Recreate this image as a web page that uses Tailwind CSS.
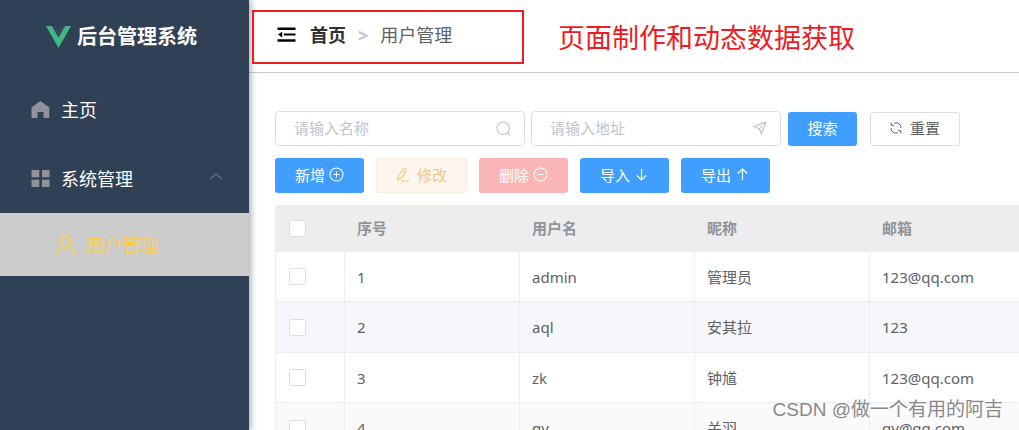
<!DOCTYPE html>
<html lang="zh-CN">
<head>
<meta charset="utf-8">
<meta name="viewport" content="width=device-width, initial-scale=1">
<title>后台管理系统</title>
<script src="https://cdn.jsdelivr.net/npm/@tailwindcss/browser@4"></script>
</head>
<body class="relative flex h-screen overflow-hidden bg-white font-['Noto_Sans','Noto_Sans_CJK_SC',sans-serif] text-[15px] leading-5 text-[#606266]">

<aside class="relative z-10 w-[249px] shrink-0 bg-[#304156] text-lg text-white shadow-[2px_0_6px_rgba(0,21,41,0.35)]">
  <div class="flex h-[74px] items-center justify-center gap-1.5 pr-1.5">
    <svg class="h-[22px] w-[25px]" viewBox="0 0 25 22" aria-hidden="true">
      <path d="M0 0H6L12.5 11.5L19 0H25L12.5 22Z" fill="#41b883"/>
      <path d="M6 0H10L12.5 4.4L15 0H19L12.5 11.5Z" fill="#34495e"/>
    </svg>
    <h1 class="text-xl font-bold">后台管理系统</h1>
  </div>
  <nav class="pt-px">
    <a href="#" class="flex h-[69px] items-center gap-[11px] pl-[31px]">
      <svg class="h-[19px] w-[19px] text-[#909399]" viewBox="0 0 19 19" fill="currentColor" aria-hidden="true"><path d="M9.5 1L18.3 7.6V18H12.5V12H6.5V18H.5V7.6Z"/></svg>
      主页
    </a>
    <a href="#" class="flex h-[69px] items-center gap-[11px] pl-[31px] pr-[26px]">
      <svg class="h-[19px] w-[19px] text-[#909399]" viewBox="0 0 19 19" fill="currentColor" aria-hidden="true"><path d="M.5 1H8.3V8.3H.5ZM11 1H18.5V8.3H11ZM.5 10.8H8.3V18H.5ZM11 10.8H18.5V18H11Z"/></svg>
      <span class="flex-1">系统管理</span>
      <svg class="mb-1.5 h-3 w-3.5 text-[#909399]" viewBox="0 0 14 12" fill="none" stroke="currentColor" aria-hidden="true"><path d="M1.5 9L7 3.5L12.5 9"/></svg>
    </a>
    <a href="#" aria-current="page" class="flex h-[63px] items-center gap-2.5 bg-[#ccc] pl-14 text-[#ffd04b]">
      <svg class="h-5 w-5" viewBox="0 0 20 20" fill="none" stroke="currentColor" stroke-width="1.6" stroke-linecap="round" aria-hidden="true"><circle cx="9.7" cy="6" r="5.3"/><path d="M1 19V17.5Q1 14.3 4.3 14.3H14.7Q18 14.3 18 17.5V19"/></svg>
      用户管理
    </a>
  </nav>
</aside>

<div class="min-w-0 flex-1">
  <header class="flex h-[73px] items-center border-b border-[#ccc] pb-[3px] pl-7 text-lg">
    <button type="button" aria-label="折叠菜单" class="text-black">
      <svg class="h-[18px] w-[19px]" viewBox="0 0 19 18" aria-hidden="true"><path d="M.5 1.5H18.5V4H.5ZM.5 13.2H18.5V15.7H.5ZM6.8 7.6H18.5V9.6H6.8ZM1 8.6L5.2 5.7V11.5Z"/></svg>
    </button>
    <nav aria-label="面包屑" class="ml-3.5 flex items-center">
      <a href="#" class="font-bold text-[#303133]">首页</a>
      <span class="mx-3 font-bold text-[#c0c4cc]">&gt;</span>
      <span>用户管理</span>
    </nav>
  </header>

  <main class="overflow-hidden pt-[38px] pl-[26px]">
    <form class="flex items-center">
      <label class="relative mr-1.5 block w-[250px]">
        <input type="text" aria-label="名称" placeholder="请输入名称" class="h-[35px] w-full rounded-sm border border-[#dcdfe6] bg-white pr-9 pb-0.5 pl-[18px] outline-none placeholder:text-[#c0c4cc]">
        <svg class="absolute top-2.5 right-3.5 h-[15px] w-[15px] text-[#c0c4cc]" viewBox="0 0 15 15" fill="none" stroke="currentColor" stroke-width="1.1" aria-hidden="true"><circle cx="7.2" cy="7.2" r="6.2"/><path d="M11.5 11.5L14 14"/></svg>
      </label>
      <label class="relative mr-[7px] block w-[250px]">
        <input type="text" aria-label="地址" placeholder="请输入地址" class="h-[35px] w-full rounded-sm border border-[#dcdfe6] bg-white pr-9 pb-0.5 pl-[18px] outline-none placeholder:text-[#c0c4cc]">
        <svg class="absolute top-2.5 right-3.5 h-[14px] w-[14px] text-[#c0c4cc]" viewBox="0 0 14 14" fill="none" stroke="currentColor" stroke-width="1.2" stroke-linejoin="round" aria-hidden="true"><path d="M13 1L1 5.5L6.2 7.8L8.5 13ZM6.2 7.8L9 5"/></svg>
      </label>
      <button type="button" class="mr-[13px] h-[34px] w-[69px] rounded-[3px] bg-[#409eff] pb-0.5 text-white">搜索</button>
      <button type="reset" class="flex h-[34px] w-[90px] items-center justify-center gap-2 rounded-[3px] border border-[#dcdfe6] bg-white pb-0.5">
        <svg class="h-3 w-3" viewBox="0 0 12 12" fill="none" stroke="currentColor" aria-hidden="true"><path d="M4 1.1Q8 -.2 10.2 3Q11 4.5 11 6M8 10.9Q4 12.2 1.8 9Q1 7.5 1 6M1.2 .5V3.3H4M10.8 11.5V8.7H8"/></svg>
        重置
      </button>
    </form>

    <div class="mt-3 flex gap-3 text-white">
      <button type="button" class="flex h-[35px] w-[89px] items-center justify-center gap-1 rounded-[3px] bg-[#409eff] pb-0.5">
        新增
        <svg class="h-[15px] w-[15px]" viewBox="0 0 15 15" fill="none" stroke="currentColor" stroke-width="1.1" aria-hidden="true"><circle cx="7.5" cy="7.5" r="6.5"/><path d="M4.5 7.5H10.5M7.5 4.5V10.5"/></svg>
      </button>
      <button type="button" disabled class="flex h-[35px] w-[91px] items-center justify-center gap-1.5 rounded-[3px] border border-[#faecd8] bg-[#fdf6ec] pb-0.5 text-[#f0c78a]">
        <svg class="h-[15px] w-[15px]" viewBox="0 0 15 15" fill="none" stroke="currentColor" stroke-width="1.1" stroke-linejoin="round" aria-hidden="true"><path d="M1.8 13.2L2.2 9L7.3 1.7Q8.3 .8 9.6 1.7Q11 2.7 10.4 3.9L5.4 11.1ZM6.4 3.1L9.5 5.2M5 14H13.5"/></svg>
        修改
      </button>
      <button type="button" disabled class="flex h-[35px] w-[89px] items-center justify-center gap-1 rounded-[3px] bg-[#fab6b6] pb-0.5">
        删除
        <svg class="h-[15px] w-[15px]" viewBox="0 0 15 15" fill="none" stroke="currentColor" stroke-width="1.1" aria-hidden="true"><circle cx="7.5" cy="7.5" r="6.5"/><path d="M4.5 7.5H10.5"/></svg>
      </button>
      <button type="button" class="flex h-[35px] w-[89px] items-center justify-center gap-1 rounded-[3px] bg-[#409eff] pb-0.5">
        导入
        <svg class="h-[15px] w-[15px]" viewBox="0 0 15 15" fill="none" stroke="currentColor" stroke-width="1.2" aria-hidden="true"><path d="M7.5 2V13M2.8 8.5L7.5 13L12.2 8.5"/></svg>
      </button>
      <button type="button" class="flex h-[35px] w-[89px] items-center justify-center gap-1 rounded-[3px] bg-[#409eff] pb-0.5">
        导出
        <svg class="h-[15px] w-[15px]" viewBox="0 0 15 15" fill="none" stroke="currentColor" stroke-width="1.2" aria-hidden="true"><path d="M7.5 13V2M2.8 6.5L7.5 2L12.2 6.5"/></svg>
      </button>
    </div>

    <table class="mt-3 w-[770px] table-fixed border-separate border-spacing-0 border-l border-[#ebeef5] text-left [&_td]:border-r [&_td]:border-b [&_td]:border-[#ebeef5] [&_td]:px-3 [&_td]:py-0 [&_th]:border-r [&_th]:border-b [&_th]:border-[#ebeef5] [&_th]:px-3 [&_th]:py-0 [&_input]:block [&_input]:size-[17px] [&_input]:appearance-none [&_input]:rounded-xs [&_input]:border [&_input]:border-[#dcdfe6] [&_input]:bg-white [&_input]:ml-px">
      <colgroup><col class="w-[69px]"><col class="w-[175px]"><col class="w-[175px]"><col class="w-[175px]"><col class="w-[175px]"></colgroup>
      <thead class="bg-[#ededed] text-[#909399]">
        <tr class="h-[47px]"><th scope="col"><input type="checkbox" aria-label="全选"></th><th scope="col">序号</th><th scope="col">用户名</th><th scope="col">昵称</th><th scope="col">邮箱</th></tr>
      </thead>
      <tbody>
        <tr class="h-[50px]"><td><input type="checkbox" aria-label="选择 admin"></td><td>1</td><td>admin</td><td>管理员</td><td>123@qq.com</td></tr>
        <tr class="h-[51px] bg-[#f5f7fa]"><td><input type="checkbox" aria-label="选择 aql"></td><td>2</td><td>aql</td><td>安其拉</td><td>123</td></tr>
        <tr class="h-[50px]"><td><input type="checkbox" aria-label="选择 zk"></td><td>3</td><td>zk</td><td>钟馗</td><td>123@qq.com</td></tr>
        <tr class="h-[51px] bg-[#fafafa]"><td><input type="checkbox" aria-label="选择 gy"></td><td>4</td><td>gy</td><td>关羽</td><td>gy@qq.com</td></tr>
      </tbody>
    </table>
  </main>
</div>

<!-- Annotations laid over the page -->
<div class="pointer-events-none absolute top-2.5 left-[252px] z-20 h-[54px] w-[272px] border-2 border-[#ed1c24]"></div>
<p class="absolute top-[18px] left-[558px] z-20 text-[27px] leading-10 whitespace-nowrap text-[#ed1c24]">页面制作和动态数据获取</p>
<p class="absolute right-4 bottom-1 z-20 font-['Liberation_Sans','Noto_Sans_CJK_SC',sans-serif] text-[19px] leading-8 whitespace-nowrap text-[#888] [text-shadow:0_0_1px_#fff]">CSDN @做一个有用的阿吉</p>
</body>
</html>
